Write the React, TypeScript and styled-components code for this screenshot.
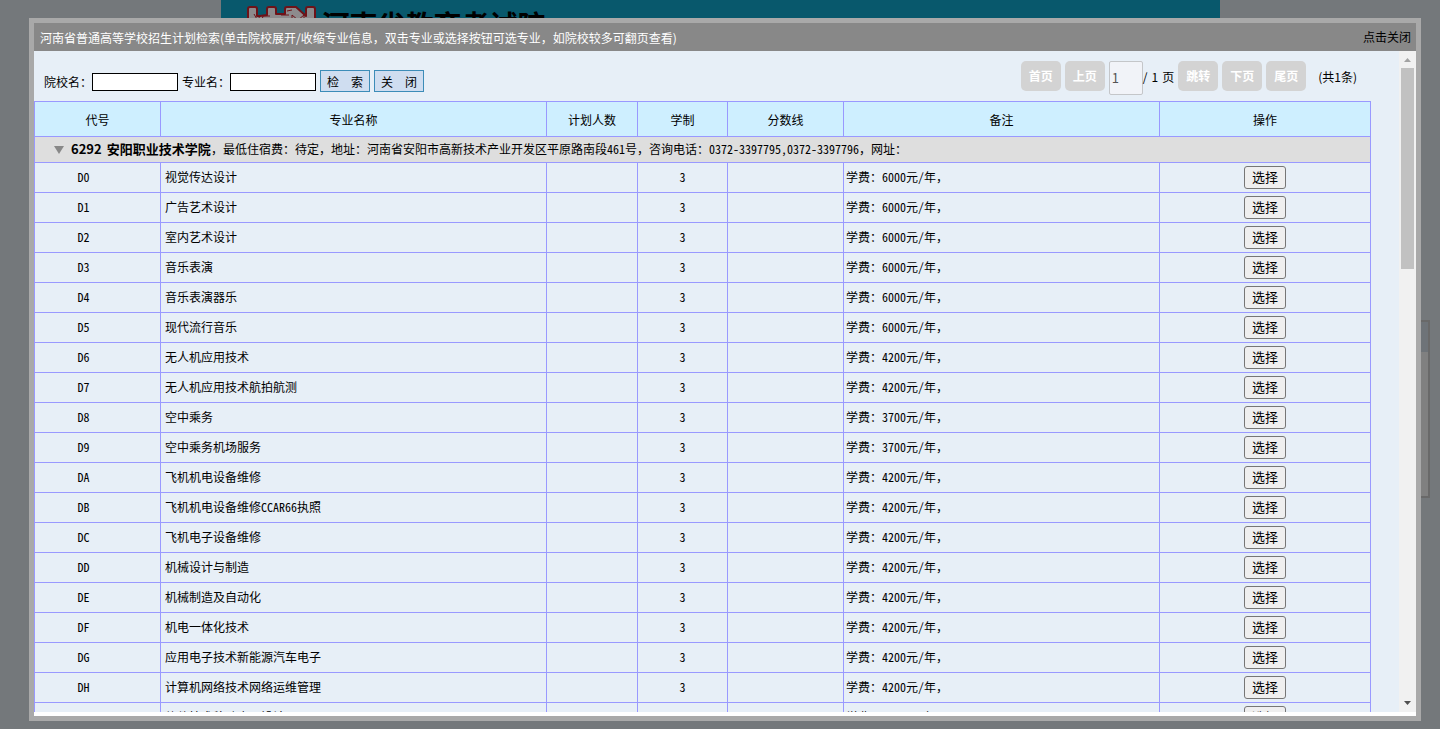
import React from "react";
import styled, { createGlobalStyle } from "styled-components";

const songti = '"Noto Sans CJK SC", "Liberation Serif", serif';
const yahei = '"Noto Sans CJK SC", "Open Sans", sans-serif';

const GlobalStyle = createGlobalStyle`
  * { box-sizing: border-box; }
  html, body { margin: 0; height: 100%; overflow: hidden; background: #74787b; }
  #root { height: 100%; }
  body { font: 12px/18px ${yahei}; color: #000; }
`;

const Page = styled.div`
  position: relative;
  height: 100vh;
  overflow: hidden;
`;

const Banner = styled.header`
  display: flex;
  align-items: flex-start;
  width: 999px;
  max-width: 100%;
  height: 90px;
  margin: 0 auto;
  padding: 6px 20px 0 26px;
  gap: 5px;
  background: #08586c;
`;

const SiteName = styled.h1`
  margin: 0;
  padding-top: 2px;
  font: 700 28px/32px "Noto Sans CJK SC", sans-serif;
  color: #000;
`;

const SidePanel = styled.aside`
  position: absolute;
  right: 10px;
  top: 320px;
  width: 120px;
  height: 178px;
  border: 2px solid #696969;
  background: linear-gradient(#6e7378 0 30px, #808080 30px);
`;

const Dialog = styled.section`
  position: fixed;
  inset: 18px 19px 8px 29px;
  display: flex;
  flex-direction: column;
  padding-bottom: 4px;
  border: 5px solid #a9a9a9;
  background: #fff;
`;

const TitleBar = styled.header`
  display: flex;
  justify-content: space-between;
  align-items: center;
  flex: none;
  height: 28px;
  padding: 0 5px 0 6px;
  background: #888;
`;

const Title = styled.h2`
  margin: 0;
  padding-top: 2px;
  font: 12px/18px ${yahei};
  color: #fff;
`;

const CloseLink = styled.button`
  padding: 0;
  border: 0;
  background: none;
  font: 12px/18px ${yahei};
  color: #000;
  cursor: pointer;
`;

const Body = styled.div`
  display: flex;
  flex: 1;
  min-height: 0;
`;

const Content = styled.main`
  flex: 1;
  min-width: 0;
  overflow: hidden;
  padding-right: 28px;
  background: #e7eff7;
`;

const Toolbar = styled.div`
  display: flex;
  justify-content: space-between;
  align-items: flex-start;
  height: 50px;
  padding: 10px 14px 0 10px;
`;

const SearchForm = styled.form`
  display: flex;
  align-items: center;
  gap: 4px;
  padding-top: 9px;
`;

const Field = styled.label`
  display: flex;
  align-items: center;
  padding-top: 2px;
`;

const TextBox = styled.input`
  width: 86px;
  height: 18px;
  padding: 0 2px;
  border: 1px solid #000;
  background: #fff;
  font: 12px/16px ${yahei};
`;

const ActionButton = styled.button`
  width: 50px;
  height: 22px;
  padding: 2px 0 0;
  border: 1px solid #3c8cb8;
  background: #cfddf0;
  font: 12px/18px ${yahei};
  white-space: pre;
`;

const Pager = styled.nav`
  display: flex;
  align-items: flex-start;
  gap: 4px;
  line-height: 32px;
`;

const PageButton = styled.button`
  width: 40px;
  height: 30px;
  padding: 0;
  border: 0;
  border-radius: 5px;
  background: #d3d3d3;
  font: bold 12px/30px ${yahei};
  color: #fff;
`;

const PageJump = styled.label`
  display: flex;
`;

const PageCount = styled.span`
  display: flex;
  gap: 4px;
`;

const PageNumber = styled.input`
  width: 34px;
  height: 34px;
  padding: 0 2px 2px;
  border: 1px solid #c4c6c9;
  border-radius: 2px;
  background: #f1f3f8;
  font: 13px/30px ${yahei};
  color: #545454;
`;

const Total = styled.span`
  padding-left: 8px;
`;

const Plan = styled.table`
  width: 100%;
  table-layout: fixed;
  border-collapse: collapse;
  font: 12px/18px ${songti};
`;

const HeadCell = styled.th`
  height: 35px;
  padding: 2px 0 0;
  border: 1px solid #99f;
  background: #ceefff;
  font-weight: normal;
`;

const SchoolCell = styled.td`
  height: 26px;
  padding: 0 0 2px 18px;
  border: 1px solid #99f;
  background: #dedede;
`;

const SchoolLine = styled.div`
  display: flex;
  align-items: center;
  white-space: pre;
`;

const Arrow = styled.svg`
  flex: none;
  width: 12px;
  height: 8px;
  margin: 2px 6px 0 0;
`;

const SchoolName = styled.b`
  display: flex;
  gap: 5px;
  width: 140px;
  font-size: 13px;
`;

const HalfWidth = styled.span`
  font-feature-settings: "hwid";
`;

const Cell = styled.td<{ $align?: string; $pad?: string }>`
  height: 30px;
  padding: ${(p) => p.$pad ?? "0 0 2px"};
  border: 1px solid #99f;
  text-align: ${(p) => p.$align ?? "center"};
`;

const ActionCell = styled(Cell)`
  padding: 0;
`;

const SelectButton = styled.button`
  display: block;
  width: 42px;
  height: 23px;
  margin: 0 auto;
  padding: 0 0 2px;
  border: 1px solid #767676;
  border-radius: 3px;
  background: #efefef;
  font: 13px/19px ${yahei};
`;

const ScrollTrack = styled.div`
  display: flex;
  flex-direction: column;
  align-items: center;
  justify-content: space-between;
  flex: none;
  width: 17px;
  background: #f1f1f1;
`;

const ScrollArrow = styled.svg`
  flex: none;
  width: 17px;
  height: 17px;
`;

const ScrollThumb = styled.div`
  width: 13px;
  height: 201px;
  margin-bottom: auto;
  background: #c1c1c1;
`;

const majors: [string, string, number][] = [
  ["D0", "视觉传达设计", 6000],
  ["D1", "广告艺术设计", 6000],
  ["D2", "室内艺术设计", 6000],
  ["D3", "音乐表演", 6000],
  ["D4", "音乐表演器乐", 6000],
  ["D5", "现代流行音乐", 6000],
  ["D6", "无人机应用技术", 4200],
  ["D7", "无人机应用技术航拍航测", 4200],
  ["D8", "空中乘务", 3700],
  ["D9", "空中乘务机场服务", 3700],
  ["DA", "飞机机电设备维修", 4200],
  ["DB", "飞机机电设备维修CCAR66执照", 4200],
  ["DC", "飞机电子设备维修", 4200],
  ["DD", "机械设计与制造", 4200],
  ["DE", "机械制造及自动化", 4200],
  ["DF", "机电一体化技术", 4200],
  ["DG", "应用电子技术新能源汽车电子", 4200],
  ["DH", "计算机网络技术网络运维管理", 4200],
  ["DJ", "软件技术移动应用设计", 4200],
];

const columns: [string, number | undefined][] = [
  ["代号", 126],
  ["专业名称", undefined],
  ["计划人数", 91],
  ["学制", 90],
  ["分数线", 116],
  ["备注", 316],
  ["操作", 211],
];

/* Latin runs take half an em per letter; Chinese text and punctuation a full em. */
function Mixed({ text }: { text: string }) {
  return (
    <span>
      {text
        .split(/([\x21-\x7e]+)/)
        .map((part, i) => (i % 2 ? <HalfWidth key={i}>{part}</HalfWidth> : part))}
    </span>
  );
}

export default function App() {
  return (
    <Page>
      <GlobalStyle />
      <Banner>
        <svg width="70" height="30" viewBox="0 0 70 30" aria-hidden="true">
          <g fill="#8d8b8d" stroke="#6e1218" strokeWidth="2" strokeLinejoin="round">
            <path d="M1 29V3q0-2 2-2h5q2 0 2 2v7h3l7-1V3q0-2 2-2h5q2 0 2 2v5h9V3q0-2 2-2h9l10 9V3q0-2 2-2h5q2 0 2 2v26z" />
          </g>
          <path
            d="M7 8l4 7 2-6M15 14l1-4h7M27 14l-7-1M34 9h8M33 13h7M45 14V9l6 5 6-5v5M40 5l5-1"
            stroke="#6e1218"
            strokeWidth="1"
            fill="none"
          />
        </svg>
        <SiteName>河南省教育考试院</SiteName>
      </Banner>
      <SidePanel />

      <Dialog role="dialog" aria-labelledby="dialog-title">
        <TitleBar>
          <Title id="dialog-title">
            河南省普通高等学校招生计划检索(单击院校展开/收缩专业信息，双击专业或选择按钮可选专业，如院校较多可翻页查看)
          </Title>
          <CloseLink type="button">点击关闭</CloseLink>
        </TitleBar>
        <Body>
          <Content>
            <Toolbar>
              <SearchForm onSubmit={(e) => e.preventDefault()}>
                <Field>
                  院校名：
                  <TextBox name="school" />
                </Field>
                <Field>
                  专业名：
                  <TextBox name="major" />
                </Field>
                <ActionButton type="submit">{"检　索"}</ActionButton>
                <ActionButton type="button">{"关　闭"}</ActionButton>
              </SearchForm>
              <Pager>
                <PageButton type="button">首页</PageButton>
                <PageButton type="button">上页</PageButton>
                <PageJump>
                  <PageNumber defaultValue="1" aria-label="页码" />
                  <PageCount>
                    <span>/</span>
                    <span>1</span>
                    <span>页</span>
                  </PageCount>
                </PageJump>
                <PageButton type="button">跳转</PageButton>
                <PageButton type="button">下页</PageButton>
                <PageButton type="button">尾页</PageButton>
                <Total>(共1条)</Total>
              </Pager>
            </Toolbar>
            <Plan>
              <colgroup>
                {columns.map(([name, width]) => (
                  <col key={name} width={width} />
                ))}
              </colgroup>
              <thead>
                <tr>
                  {columns.map(([name]) => (
                    <HeadCell key={name} scope="col">{name}</HeadCell>
                  ))}
                </tr>
              </thead>
              <tbody>
                <tr>
                  <SchoolCell colSpan={7}>
                    <SchoolLine>
                      <Arrow viewBox="0 0 12 8" aria-hidden="true">
                        <path d="M1 0h10L6 8z" fill="#888" />
                      </Arrow>
                      <SchoolName>
                        <span>6292</span>
                        <span>安阳职业技术学院</span>
                      </SchoolName>
                      <Mixed text="，最低住宿费：待定，地址：河南省安阳市高新技术产业开发区平原路南段461号，咨询电话：0372-3397795,0372-3397796，网址：" />
                    </SchoolLine>
                  </SchoolCell>
                </tr>
                {majors.map(([code, name, fee]) => (
                  <tr key={code}>
                    <Cell $pad="0 28px 2px 0"><Mixed text={code} /></Cell>
                    <Cell $align="left" $pad="0 0 2px 4px"><Mixed text={name} /></Cell>
                    <Cell />
                    <Cell><Mixed text="3" /></Cell>
                    <Cell />
                    <Cell $align="left" $pad="0 0 2px 2px"><Mixed text={`学费：${fee}元/年，`} /></Cell>
                    <ActionCell>
                      <SelectButton type="button">选择</SelectButton>
                    </ActionCell>
                  </tr>
                ))}
              </tbody>
            </Plan>
          </Content>
          <ScrollTrack aria-hidden="true">
            <ScrollArrow viewBox="0 0 17 17">
              <path d="M5 11h7L8.500 7z" fill="#a3a3a3" />
            </ScrollArrow>
            <ScrollThumb />
            <ScrollArrow viewBox="0 0 17 17">
              <path d="M5 6h7l-3.500 4z" fill="#505050" />
            </ScrollArrow>
          </ScrollTrack>
        </Body>
      </Dialog>
    </Page>
  );
}
